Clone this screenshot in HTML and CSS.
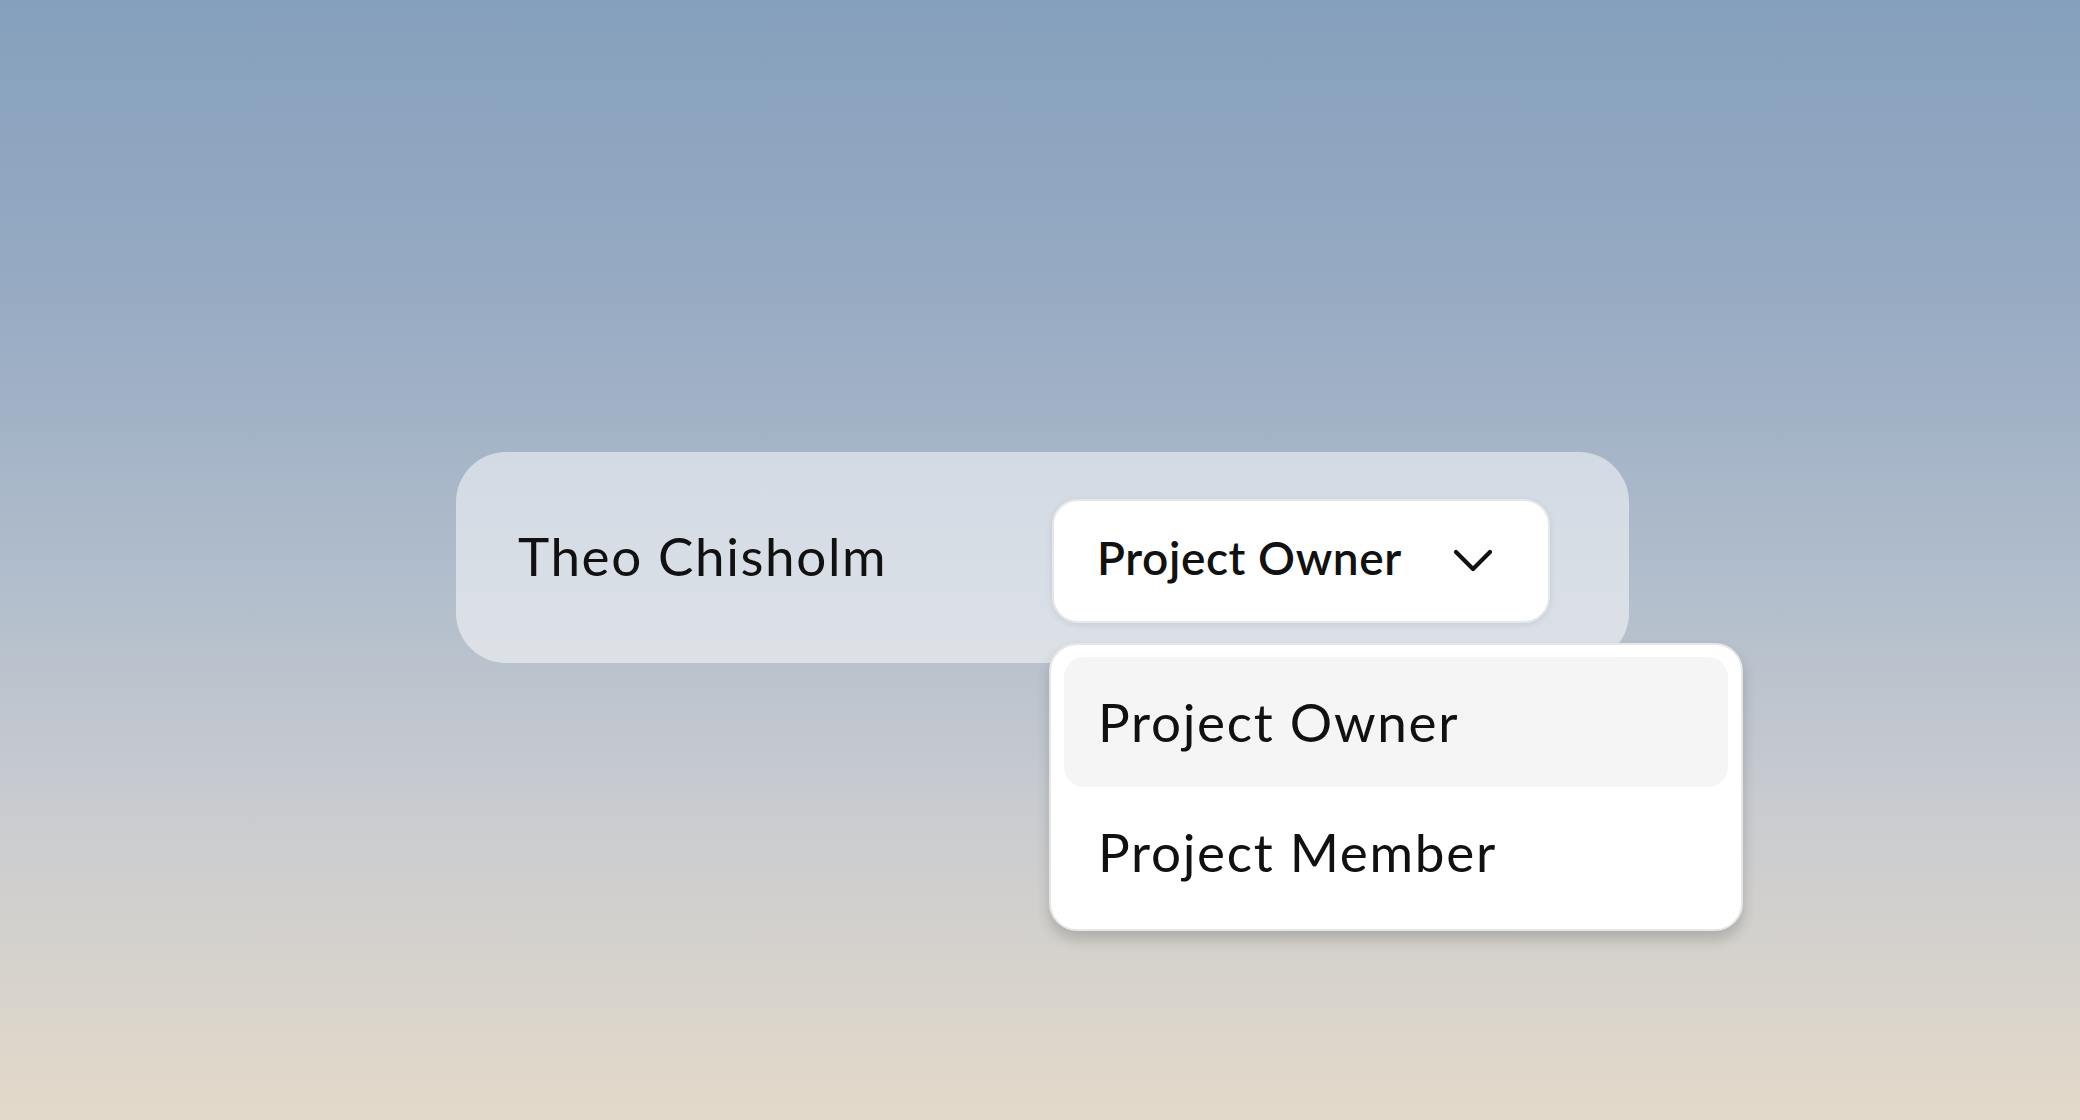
FILE: index.html
```html
<!DOCTYPE html>
<html>
<head>
<meta charset="utf-8">
<link rel="stylesheet" href="styles.css">
</head>
<body>
<div class="stage">
  <div class="card">
    <div class="name">Theo Chisholm</div>
    <div class="select-wrap">
      <div class="select">
        <span class="select-label">Project Owner</span>
        <svg class="chev" width="40" height="24" viewBox="0 0 40 24"><path d="M3 3 L20 20 L37 3" fill="none" stroke="#111" stroke-width="4.2" stroke-linecap="round" stroke-linejoin="round"/></svg>
      </div>
      <div class="menu">
        <div class="item active">Project Owner</div>
        <div class="item">Project Member</div>
      </div>
    </div>
  </div>
</div>
</body>
</html>
```
FILE: styles.css
```css
html, body {
  margin: 0;
  padding: 0;
}
body {
  width: 2080px;
  height: 1120px;
  overflow: hidden;
  font-family: "Lato", "Noto Sans", sans-serif;
  color: #111;
  background: linear-gradient(to bottom, #85a0bd 0%, #98abc3 27%, #afbccb 50%, #c8cbd0 71%, #e3d9c9 100%);
}
.stage {
  padding-top: 452px;
  padding-left: 456px;
}
.card {
  width: 1173px;
  height: 211px;
  box-sizing: border-box;
  border-radius: 50px;
  background: rgba(255, 255, 255, 0.5);
  display: flex;
  align-items: center;
  padding-left: 62px;
}
.name {
  width: 534px;
  font-size: 53px;
  font-weight: 400;
  letter-spacing: 1.6px;
  position: relative;
  top: -2px;
}
.select-wrap {
  position: relative;
  margin-top: 6px;
}
.select {
  width: 498px;
  height: 124px;
  box-sizing: border-box;
  background: #fff;
  border: 2px solid #e4e7ec;
  border-radius: 26px;
  display: flex;
  align-items: center;
  padding-left: 43px;
  box-shadow: 0 2px 6px rgba(60, 70, 90, 0.12);
}
.select-label {
  font-size: 46px;
  font-weight: 600;
  letter-spacing: 0.6px;
  width: 356px;
  position: relative;
  top: -3px;
}
.chev {
  display: block;
}
.menu {
  position: absolute;
  left: -3px;
  top: 144px;
  width: 694px;
  box-sizing: border-box;
  background: #fff;
  border: 2px solid #e6e6e6;
  border-radius: 28px;
  padding: 12px 13px;
  box-shadow: 0 8px 14px rgba(0, 0, 0, 0.18);
}
.item {
  height: 130px;
  border-radius: 20px;
  display: flex;
  align-items: center;
  padding-left: 34px;
  font-size: 53px;
  font-weight: 400;
  letter-spacing: 1.7px;
  line-height: 1;
}
.item.active {
  background: #f5f5f5;
}
```
